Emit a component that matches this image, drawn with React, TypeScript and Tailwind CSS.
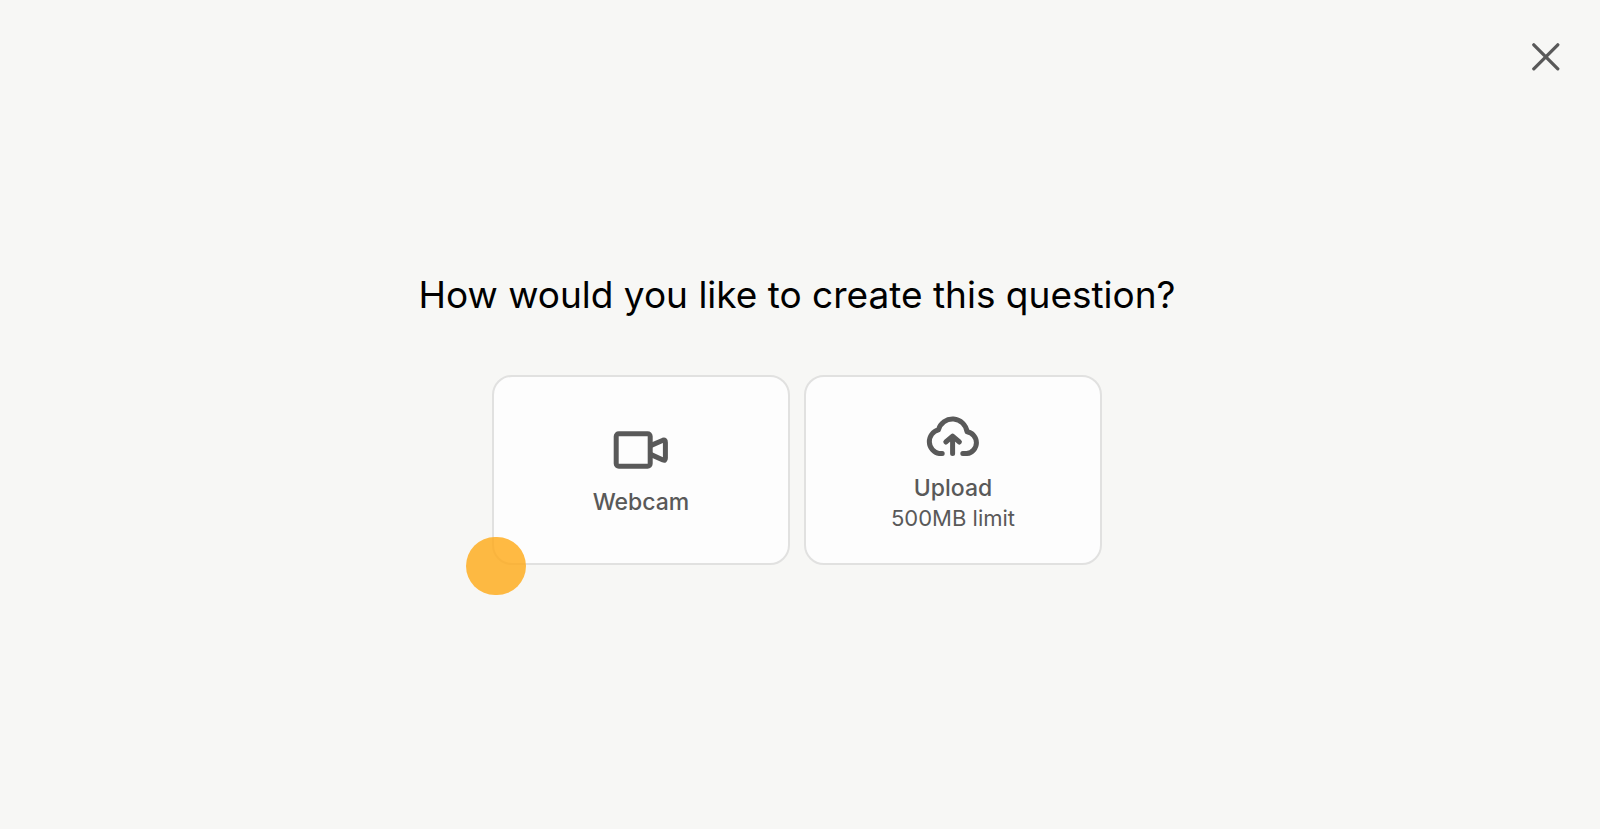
import type { ReactNode } from "react";

const CloseIcon = () => (
  <svg
    className="size-7"
    viewBox="0 0 28 28"
    fill="none"
    stroke="currentColor"
    strokeWidth={3.3}
    strokeLinecap="round"
    aria-hidden="true"
  >
    <path d="M1.8 1.8l24 24M25.8 1.8L1.8 25.8" />
  </svg>
);

const WebcamIcon = () => (
  <svg
    className="h-10 w-14"
    viewBox="0 0 56 40"
    fill="none"
    stroke="currentColor"
    strokeWidth={5}
    strokeLinejoin="round"
    aria-hidden="true"
  >
    <rect x="3.2" y="3.8" width="34" height="32.4" rx="2.6" />
    <path d="M37.6 15.6L50 10.2Q52.4 9.4 52.4 12.4V28Q52.4 31 50 30L37.6 24.4" />
  </svg>
);

const UploadIcon = () => (
  <svg
    className="h-11 w-14 overflow-visible"
    viewBox="0 0 56 44"
    fill="none"
    stroke="currentColor"
    strokeWidth={5}
    strokeLinecap="round"
    strokeLinejoin="round"
    aria-hidden="true"
  >
    <path d="M17.2 41.6H14.4A12.2 12.2 0 0 1 13.4 17.8A14.6 14.6 0 0 1 42 19.8A11 11 0 0 1 41.8 41.6H37.8" />
    <path d="M27.6 41.6V25M20.8 30L27.6 24.2L34.4 30" />
  </svg>
);

type OptionCardProps = {
  icon: ReactNode;
  label: string;
  note?: string;
};

const OptionCard = ({ icon, label, note }: OptionCardProps) => {
  return (
    <button
      type="button"
      className="flex h-[190px] w-[298px] flex-col items-center justify-center rounded-[20px] border-2 border-[#e1e1e0] bg-[#fdfdfd] pt-2 text-[#595959]"
    >
      {icon}
      <span className="mt-4 text-[23px] leading-8 font-medium">{label}</span>
      {note && <span className="pb-1 text-[22px] leading-7">{note}</span>}
    </button>
  );
};

const App = () => {
  return (
    <div className="flex min-h-screen flex-col bg-[#f7f7f5] font-['Inter',sans-serif]">
      <header className="flex justify-end px-10 pt-[43px] pb-11">
        <button type="button" aria-label="Close" className="text-[#595959]">
          <CloseIcon />
        </button>
      </header>
      <main className="flex flex-1 flex-col items-center justify-center pr-1.5 pb-[108px]">
        <h1 className="text-center text-[37px] leading-12 text-black">
          How would you like to create this question?
        </h1>
        <div className="relative mt-14 flex gap-3.5">
          <OptionCard icon={<WebcamIcon />} label="Webcam" />
          <OptionCard icon={<UploadIcon />} label="Upload" note="500MB limit" />
          {/* pointer highlight */}
          <span className="pointer-events-none absolute -bottom-[30px] -left-[26px] h-[58px] w-[60px] rounded-full bg-[#ffa915]/80" />
        </div>
      </main>
    </div>
  );
};

export default App;
